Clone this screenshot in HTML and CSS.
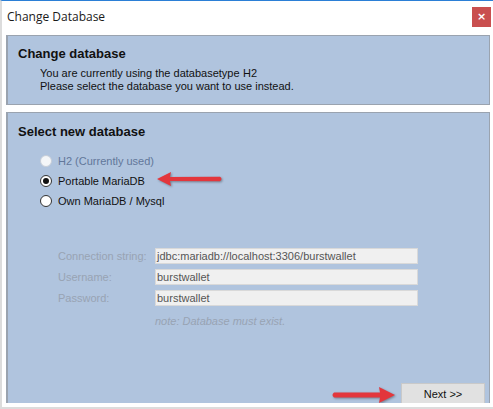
FILE: index.html
```html
<!DOCTYPE html>
<html>
<head>
<meta charset="utf-8">
<link rel="stylesheet" href="styles.css">
</head>
<body>
<div class="window">
  <div class="titlebar">
    <span class="title">Change Database</span>
    <span class="close">&#215;</span>
  </div>
  <div class="content">
    <section class="panel info">
      <h2 class="heading">Change database</h2>
      <div class="info-lines">
        <div class="line"><span class="clip">You are currently using the databasetype</span><span>H2</span></div>
        <div class="line">Please select the database you want to use instead.</div>
      </div>
    </section>
    <section class="panel select">
      <h2 class="heading">Select new database</h2>
      <div class="radios">
        <div class="radio disabled"><span class="dot"></span><span>H2 (Currently used)</span></div>
        <div class="radio checked"><span class="dot"></span><span>Portable MariaDB</span></div>
        <div class="radio"><span class="dot"></span><span>Own MariaDB / Mysql</span></div>
      </div>
      <div class="fields">
        <label class="lbl">Connection string:</label>
        <div class="input">jdbc:mariadb://localhost:3306/burstwallet</div>
        <label class="lbl">Username:</label>
        <div class="input">burstwallet</div>
        <label class="lbl">Password:</label>
        <div class="input">burstwallet</div>
        <span></span>
        <div class="note">note: Database must exist.</div>
      </div>
      <div class="actions">
        <button class="next">Next &gt;&gt;</button>
      </div>
      <svg class="arrow arrow-left" width="70" height="18" viewBox="0 0 70 18">
        <path d="M1 9 L15 2 L14 7 L64 6.8 Q67 9 64 11.2 L14 11 L15 16 Z" fill="#e3363c"/>
      </svg>
      <svg class="arrow arrow-right" width="66" height="20" viewBox="0 0 66 20">
        <path d="M64 10 L48 2 L49 7.5 L3 7.5 Q0 10 3 12.5 L49 12.5 L48 18 Z" fill="#e3363c"/>
      </svg>
    </section>
  </div>
</div>
</body>
</html>
```

FILE: styles.css
```css
* { box-sizing: border-box; }
html, body { margin: 0; padding: 0; background: #ffffff; }
body { width: 493px; height: 409px; overflow: hidden; }

.window {
  width: 493px;
  height: 409px;
  border-top: 1px solid #2b7fd6;
  border-left: 2px solid #dcdcdc;
  border-bottom: 2px solid #dcdcdc;
  background: #ffffff;
  display: flex;
  flex-direction: column;
}

.titlebar {
  height: 34px;
  flex: none;
  display: flex;
  align-items: flex-start;
  justify-content: space-between;
  padding-left: 5px;
}
.title {
  font-family: "Open Sans", "Noto Sans", sans-serif;
  font-size: 12px;
  color: #1a1a1a;
  line-height: 16px;
  margin-top: 8px;
}
.close {
  width: 19px;
  height: 20px;
  margin-top: 6px;
  margin-right: 2px;
  background: #c94f4f;
  color: #ffffff;
  font-family: "DejaVu Sans", sans-serif;
  font-size: 11px;
  font-weight: bold;
  line-height: 20px;
  text-align: center;
}

.content {
  flex: 1;
  display: flex;
  flex-direction: column;
  gap: 7px;
  padding: 0 3px 4px 4px;
  min-height: 0;
}

.panel {
  background: #b0c4de;
  border: 1px solid #9aa3af;
  border-left-width: 2px;
  font-family: "Liberation Sans", Arial, sans-serif;
  color: #111;
}
.info { height: 70px; flex: none; padding: 10px 0 0 10px; }
.select {
  flex: 1;
  border-bottom: none;
  padding: 11px 0 0 10px;
  position: relative;
  overflow: hidden;
  display: flex;
  flex-direction: column;
}

.heading {
  margin: 0;
  font-size: 13px;
  font-weight: bold;
  line-height: 16px;
  color: #111;
}

.info-lines { margin-top: 5px; padding-left: 22px; font-size: 11px; line-height: 13px; }
.line { display: flex; white-space: nowrap; }
.clip { display: inline-block; width: 202px; overflow: hidden; margin-right: 1px; }

.radios { margin-top: 11px; padding-left: 22px; font-size: 11px; }
.radio { height: 20px; display: flex; align-items: center; gap: 6px; }
.dot {
  width: 12px; height: 12px; border-radius: 50%;
  background: #ffffff; border: 1px solid #333;
  display: flex; align-items: center; justify-content: center;
}
.radio.checked .dot::after {
  content: ""; width: 6px; height: 6px; border-radius: 50%; background: #111;
}
.radio.disabled { color: #62779a; }
.radio.disabled .dot { border-color: #c7ced8; background: #f4f6f8; }

.fields {
  margin-top: 37px;
  padding-left: 40px;
  display: grid;
  grid-template-columns: 97px 263px;
  row-gap: 5px;
  font-size: 11px;
  align-items: center;
}
.lbl { color: #98a3b3; line-height: 16px; }
.input {
  height: 16px;
  background: #f0f0f0;
  border: 1px solid #d9d9d9;
  color: #555;
  line-height: 14px;
  padding-left: 1px;
  white-space: nowrap;
}
.note { color: #98a3b3; font-style: italic; margin-top: 3px; line-height: 14px; }

.actions {
  margin-top: auto;
  display: flex;
  justify-content: flex-end;
  padding-right: 4px;
  margin-bottom: -4px;
}
.next {
  width: 84px;
  height: 24px;
  background: #e1e1e1;
  border: 1px solid #c9c9c9;
  font-family: "Liberation Sans", Arial, sans-serif;
  font-size: 11px;
  color: #111;
  padding: 0;
  padding-bottom: 2px;
}

.arrow { position: absolute; }
.arrow-left { left: 148px; top: 57px; filter: drop-shadow(1px 1px 1px rgba(0,0,0,0.35)); }
.arrow-right { left: 323px; top: 272px; filter: drop-shadow(1px 1px 1px rgba(0,0,0,0.35)); }
```
